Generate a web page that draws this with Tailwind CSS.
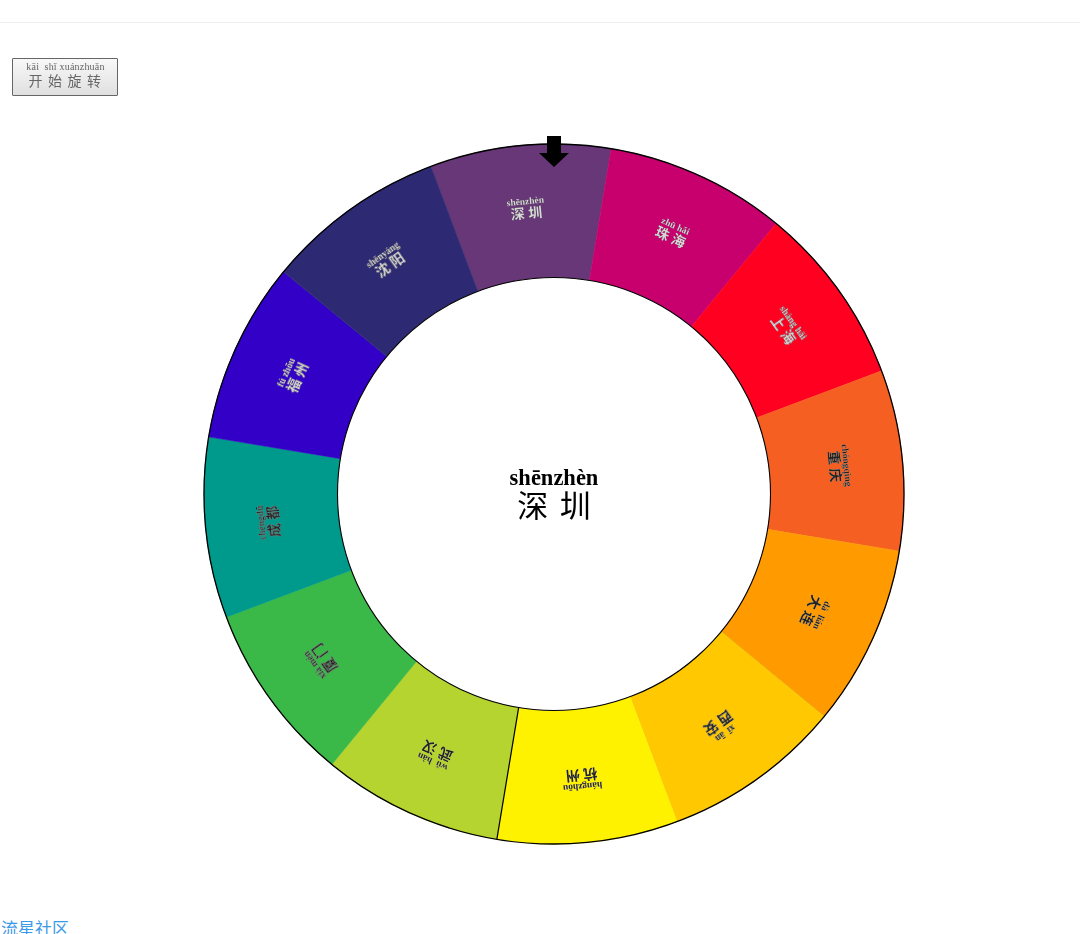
<!DOCTYPE html>
<html lang="zh">
<head>
<meta charset="utf-8">
<title>开始旋转</title>
<script src="https://cdn.jsdelivr.net/npm/@tailwindcss/browser@4"></script>
</head>
<body class="bg-white h-[934px] overflow-hidden font-['Liberation_Serif','Noto_Sans_CJK_SC',serif]">
<div class="h-[23px] border-b border-[#eeeeee]"></div>
<button class="flex flex-col items-center mt-[35px] ml-[12px] w-[106px] h-[38px] pt-[3px] border border-[#666666] rounded-[1px] bg-gradient-to-b from-[#f8f8f8] to-[#e0e0e0] text-[#666666] leading-none blur-[0.4px]">
  <span class="block text-[10px] leading-[10px] tracking-[0.2px] pl-[1px]">kāi&nbsp; shǐ xuánzhuǎn</span>
  <span class="block text-[14px] leading-[16px] tracking-[5.5px] pl-[5px] font-['Noto_Sans_CJK_SC',sans-serif]">开始旋转</span>
</button>
<svg class="block mt-[34px] ml-[194px] w-[720px] h-[730px] blur-[0.45px]" viewBox="0 0 720 730" xmlns="http://www.w3.org/2000/svg">
  <g transform="translate(360 364)">
    <path transform="rotate(-5.6)" fill="#673777" stroke="#673777" stroke-width="0.5" d="M-90.59 -338.07A350 350 0 0 1 90.59 -338.07L56.03 -209.12A216.5 216.5 0 0 0 -56.03 -209.12Z"/>
    <path transform="rotate(24.4)" fill="#c8006e" stroke="#c8006e" stroke-width="0.5" d="M-90.59 -338.07A350 350 0 0 1 90.59 -338.07L56.03 -209.12A216.5 216.5 0 0 0 -56.03 -209.12Z"/>
    <path transform="rotate(54.4)" fill="#ff0021" stroke="#ff0021" stroke-width="0.5" d="M-90.59 -338.07A350 350 0 0 1 90.59 -338.07L56.03 -209.12A216.5 216.5 0 0 0 -56.03 -209.12Z"/>
    <path transform="rotate(84.4)" fill="#f55f22" stroke="#f55f22" stroke-width="0.5" d="M-90.59 -338.07A350 350 0 0 1 90.59 -338.07L56.03 -209.12A216.5 216.5 0 0 0 -56.03 -209.12Z"/>
    <path transform="rotate(114.4)" fill="#ff9a00" stroke="#ff9a00" stroke-width="0.5" d="M-90.59 -338.07A350 350 0 0 1 90.59 -338.07L56.03 -209.12A216.5 216.5 0 0 0 -56.03 -209.12Z"/>
    <path transform="rotate(144.4)" fill="#ffc800" stroke="#d8a800" stroke-width="0.5" d="M-90.59 -338.07A350 350 0 0 1 90.59 -338.07L56.03 -209.12A216.5 216.5 0 0 0 -56.03 -209.12Z"/>
    <path transform="rotate(174.4)" fill="#fff200" stroke="#fff200" stroke-width="0.5" d="M-90.59 -338.07A350 350 0 0 1 90.59 -338.07L56.03 -209.12A216.5 216.5 0 0 0 -56.03 -209.12Z"/>
    <path transform="rotate(204.4)" fill="#b6d430" stroke="#b6d430" stroke-width="0.5" d="M-90.59 -338.07A350 350 0 0 1 90.59 -338.07L56.03 -209.12A216.5 216.5 0 0 0 -56.03 -209.12Z"/>
    <path transform="rotate(234.4)" fill="#3ab848" stroke="#3ab848" stroke-width="0.5" d="M-90.59 -338.07A350 350 0 0 1 90.59 -338.07L56.03 -209.12A216.5 216.5 0 0 0 -56.03 -209.12Z"/>
    <path transform="rotate(264.4)" fill="#009a8c" stroke="#009a8c" stroke-width="0.5" d="M-90.59 -338.07A350 350 0 0 1 90.59 -338.07L56.03 -209.12A216.5 216.5 0 0 0 -56.03 -209.12Z"/>
    <path transform="rotate(294.4)" fill="#3300c8" stroke="#3300c8" stroke-width="0.5" d="M-90.59 -338.07A350 350 0 0 1 90.59 -338.07L56.03 -209.12A216.5 216.5 0 0 0 -56.03 -209.12Z"/>
    <path transform="rotate(324.4)" fill="#2d2a73" stroke="#2d2a73" stroke-width="0.5" d="M-90.59 -338.07A350 350 0 0 1 90.59 -338.07L56.03 -209.12A216.5 216.5 0 0 0 -56.03 -209.12Z"/>
    <line transform="rotate(189.4)" x1="0" y1="-216" x2="0" y2="-350" stroke="#000000" stroke-width="1.2"/>
    <circle r="350" fill="none" stroke="#000000" stroke-width="1.3"/>
    <circle r="216.5" fill="#ffffff" stroke="#000000" stroke-width="1.1"/>

    <g class="font-bold fill-[#d8d8d8] drop-shadow-[0.8px_0.8px_0_#222222]" text-anchor="middle">
      <g transform="rotate(-5.6)"><text y="-291" font-size="9.5">shēnzhèn</text><text y="-277" font-size="14">深 圳</text></g>
      <g transform="rotate(24.4)"><text y="-291" font-size="9.5">zhū hǎi</text><text y="-277" font-size="14">珠 海</text></g>
      <g transform="rotate(54.4)"><text y="-291" font-size="9.5">shàng hǎi</text><text y="-277" font-size="14">上 海</text></g>
      <g transform="rotate(294.4)"><text y="-291" font-size="9.5">fú zhōu</text><text y="-277" font-size="14">福 州</text></g>
      <g transform="rotate(324.4)"><text y="-291" font-size="9.5">shěnyáng</text><text y="-277" font-size="14">沈 阳</text></g>
    </g>
    <g class="font-bold fill-[#222222] drop-shadow-[0.7px_0.7px_0_#e8e8e8]" text-anchor="middle">
      <g transform="rotate(84.4)"><text y="-291" font-size="9.5">chóngqìng</text><text y="-277" font-size="14">重 庆</text></g>
      <g transform="rotate(114.4)"><text y="-291" font-size="9.5">dà&#160;&#160;lián</text><text y="-277" font-size="14">大 连</text></g>
      <g transform="rotate(144.4)"><text y="-291" font-size="9.5">xī&#160;&#160;ān</text><text y="-277" font-size="14">西 安</text></g>
      <g transform="rotate(174.4)"><text y="-291" font-size="9.5">hángzhōu</text><text y="-277" font-size="14">杭 州</text></g>
      <g transform="rotate(204.4)"><text y="-291" font-size="9.5">wǔ&#160;&#160;hàn</text><text y="-277" font-size="14">武 汉</text></g>
      <g transform="rotate(234.4)"><text y="-291" font-size="9.5">xià mén</text><text y="-277" font-size="14">厦 门</text></g>
      <g transform="rotate(264.4)"><text y="-291" font-size="9.5">chéngdū</text><text y="-277" font-size="14">成 都</text></g>
    </g>

    <text y="-9" text-anchor="middle" font-size="22.5" class="font-bold fill-black">shēnzhèn</text>
    <text y="23" text-anchor="middle" font-size="31" class="fill-black [word-spacing:4px]">深 圳</text>
    <path fill="#000000" d="M-7 -358H7V-341H15L0 -327L-15 -341H-7Z"/>
  </g>
</svg>
<a href="#" class="block mt-[60px] ml-[1px] text-[17px] leading-[15px] text-[#3b9ae8] font-['Noto_Sans_CJK_SC',sans-serif]">流星社区</a>
</body>
</html>
